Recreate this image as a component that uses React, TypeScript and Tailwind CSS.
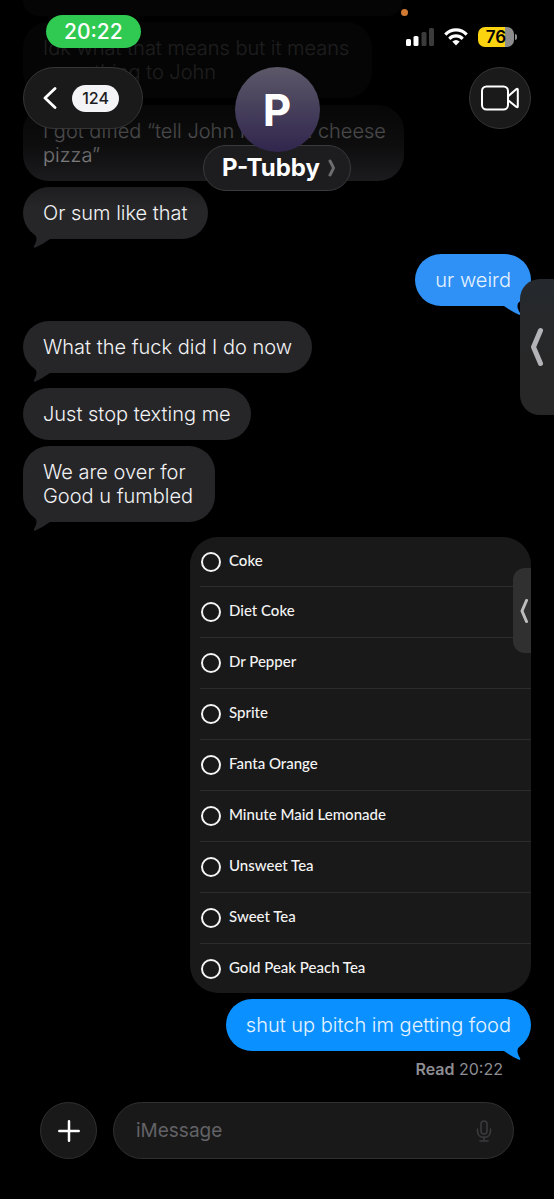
import React from 'react'

interface Message {
  text: string
  mine?: boolean
  tail?: string
  spacing: string
  width?: string
  color: string
}

const history: Message[] = [
  { text: "Idk what that means but it means something to John", spacing: "mt-1.5", width: "max-w-[349px] pr-4", color: "bg-[#262629] text-[#f2f2f4]" },
  { text: "I got dified “tell John I want a cheese pizza”", spacing: "mt-[7px]", width: "max-w-[381px] pr-3", color: "bg-[#262629] text-[#f2f2f4]" },
  { text: "Or sum like that", tail: "text-[#262629]", spacing: "mt-1.5", color: "bg-[#262629] text-[#f2f2f4]" },
  { text: "ur weird", mine: true, tail: "text-[#2f90f6]", spacing: "mt-[15px]", color: "bg-[#2f90f6] text-[#e6f3ff]" },
  { text: "What the fuck did I do now", tail: "text-[#262629]", spacing: "mt-[15px]", color: "bg-[#262629] text-[#f2f2f4]" },
  { text: "Just stop texting me", spacing: "mt-[15px]", color: "bg-[#262629] text-[#f2f2f4]" },
  { text: "We are over for Good u fumbled", tail: "text-[#262629]", spacing: "mt-1.5", width: "max-w-[192px] pr-4", color: "bg-[#262629] text-[#f2f2f4]" },
]

const drinks = [
  "Coke",
  "Diet Coke",
  "Dr Pepper",
  "Sprite",
  "Fanta Orange",
  "Minute Maid Lemonade",
  "Unsweet Tea",
  "Sweet Tea",
  "Gold Peak Peach Tea",
]

function Bubble({ text, mine, tail, spacing, width = "", color }: Message) {
  return (
    <div className={`relative rounded-[26px] px-5 py-3.5 text-xl leading-6 font-[350] ${mine ? "self-end" : "self-start"} ${spacing} ${width} ${color}`}>
      {tail && (
        <svg
          viewBox="0 0 20 18"
          className={`absolute -bottom-[10px] h-[18px] w-5 ${mine ? "right-2 -scale-x-100" : "left-2"} ${tail}`}
          fill="currentColor"
          aria-hidden="true"
        >
          <path d="M0 0C5 4 8 7 3 15Q2 17.500 4.500 16.500Q12 13 19 8L19 0Z" />
        </svg>
      )}
      <p className="relative">{text}</p>
    </div>
  )
}

function DrinkList() {
  return (
    <div className="relative mt-[15px] w-[341px] self-end overflow-hidden rounded-[28px] bg-[#191919] pl-2.5">
      <fieldset>
        {drinks.map((drink) => (
          <label
            key={drink}
            className="flex h-[51px] items-center gap-2 border-b border-[#2c2c2c] pl-px font-['Lato','Open_Sans',sans-serif] text-[15px] leading-5 font-medium text-[#f4f4f4] first:h-[50px] last:h-[49px] last:border-b-0"
          >
            <input type="radio" name="drink" className="size-5 appearance-none rounded-full border-2 border-[#f4f4f4]" />
            <span className="pb-1">{drink}</span>
          </label>
        ))}
      </fieldset>
      <div className="absolute top-[31px] right-0 flex h-[85px] w-[18px] items-center justify-end rounded-l-xl bg-[#303030] pr-[3px]">
        <svg viewBox="0 0 8 26" className="h-[26px] w-2" fill="none" stroke="#bdbdbd" strokeWidth="3" strokeLinecap="round" strokeLinejoin="round" aria-hidden="true">
          <path d="M6.500 2.500L2 13L6.500 23.500" />
        </svg>
      </div>
    </div>
  )
}

function StatusBar() {
  return (
    <div className="flex items-start justify-between pr-[37px] pl-[46px]">
      <div className="rounded-full bg-[#30c952] px-[18px] py-1 text-[21px] leading-[25px] font-medium text-white">20:22</div>
      <div className="mt-3 flex items-center gap-2.5">
        <svg viewBox="0 0 28 18" className="h-[18px] w-7" aria-hidden="true">
          <rect x="0" y="11" width="5" height="7" rx="1.500" fill="#fff" />
          <rect x="7.500" y="8" width="5" height="10" rx="1.500" fill="#fff" />
          <rect x="15.500" y="4" width="5" height="14" rx="1.500" fill="#3b3b3b" />
          <rect x="23" y="0" width="5" height="18" rx="1.500" fill="#3b3b3b" />
        </svg>
        <svg viewBox="0 0 24 18" className="h-[18px] w-6" fill="none" stroke="#fff" strokeWidth="3.200" aria-hidden="true">
          <path d="M1.300 6.600C7.300 0.400 16.700 0.400 22.700 6.600" />
          <path d="M5.300 10.800C9.200 7 14.800 7 18.700 10.800" />
          <path d="M8.300 13.600Q12 10.600 15.700 13.600L12 17.600Z" fill="#fff" stroke="none" />
        </svg>
        <div className="flex items-center gap-px">
          <div className="flex h-5 w-9 items-center justify-center rounded-[7px] bg-linear-to-r from-[#fbd40f] from-75% to-[#8c8c8c] to-75% text-[17px] leading-5 font-semibold text-black">
            76
          </div>
          <div className="h-1.5 w-0.5 rounded-r-full bg-[#8c8c8c]" />
        </div>
      </div>
    </div>
  )
}

function ChatHeader() {
  return (
    <header className="absolute inset-x-0 top-0 pt-[15px]">
      <div className="absolute top-[9px] left-[401px] size-[7px] rounded-full bg-[#d17a32]" />
      <StatusBar />
      <div className="mt-[19px] grid grid-cols-[1fr_auto_1fr] items-start px-[23px]">
        <button type="button" aria-label="Back, 124 unread" className="flex h-[62px] w-[120px] items-center gap-[15px] rounded-full border border-[#353536] bg-[#1a1a1b] pl-[19px]">
          <svg viewBox="0 0 14 22" className="h-[22px] w-3.5" fill="none" stroke="#fff" strokeWidth="2.800" strokeLinecap="round" strokeLinejoin="round" aria-hidden="true">
            <path d="M12 1.500L2 11L12 20.500" />
          </svg>
          <span className="flex h-[27px] w-[47px] items-center justify-center rounded-full bg-[#f4f4f6] text-base font-medium text-[#1c1c1e]">124</span>
        </button>
        <div className="flex flex-col items-center">
          <div className="relative z-10 flex size-[85px] items-center justify-center rounded-full bg-linear-to-b from-[#5c5868] to-[#31264d] text-[44px] font-bold text-white">
            P
          </div>
          <button type="button" className="-mt-[7px] flex h-[46px] items-center gap-2 rounded-full border border-[#3a3a3c] bg-[#1d1d1f] pr-3.5 pl-[18px] text-2xl leading-6 font-bold text-white">
            P-Tubby
            <svg viewBox="0 0 8 18" className="h-[18px] w-2" fill="none" stroke="#6d6d70" strokeWidth="3" strokeLinecap="round" strokeLinejoin="round" aria-hidden="true">
              <path d="M2 2Q4 5.500 5.500 9Q4 12.500 2 16" />
            </svg>
          </button>
        </div>
        <button type="button" aria-label="Video call" className="flex size-[62px] items-center justify-center justify-self-end rounded-full border border-[#353536] bg-[#1a1a1b]">
          <svg viewBox="0 0 38 26" className="h-[26px] w-[38px]" fill="none" stroke="#fff" strokeWidth="2" strokeLinejoin="round" aria-hidden="true">
            <rect x="1" y="1.500" width="26" height="23" rx="4.500" />
            <path d="M27.500 11L35.500 4Q36.800 3.200 36.800 4.800V21.200Q36.800 22.800 35.500 22L27.500 15.500" />
          </svg>
        </button>
      </div>
    </header>
  )
}

export default function App() {
  return (
    <div className="relative flex min-h-screen flex-col overflow-hidden bg-black font-['Inter','Liberation_Sans',sans-serif]">
      <main className="flex flex-col px-[23px]">
        {/* bottom edge of the message scrolled out of view */}
        <div className="h-4 w-full max-w-[380px] rounded-b-[26px] bg-[#262629]" />
        {history.map((message) => (
          <Bubble key={message.text} {...message} />
        ))}
        <DrinkList />
        <Bubble text="shut up bitch im getting food" mine tail="text-[#0a91ff]" spacing="mt-1.5" color="bg-[#0a91ff] text-[#e6f3ff]" />
        <p className="mt-2 mr-7 self-end text-base leading-5 text-[#8d8d93]">
          <span className="font-semibold">Read</span> 20:22
        </p>
      </main>

      {/* messages fade out under the header */}
      <div className="pointer-events-none absolute inset-x-0 top-0 h-52 bg-linear-to-b from-black/88 from-45% via-black/65 via-70% to-transparent" />
      <ChatHeader />

      <button type="button" aria-label="Show picture in picture" className="absolute top-[279px] right-0 flex h-[136px] w-[34px] items-center rounded-l-[20px] bg-linear-to-b from-[#25292d] to-[#272727] to-60% pl-2.5">
        <svg viewBox="0 0 14 40" className="h-10 w-3.5" fill="none" stroke="#b4b4b8" strokeWidth="5" strokeLinecap="round" strokeLinejoin="round" aria-hidden="true">
          <path d="M10.500 3.500L3.500 20L10.500 36.500" />
        </svg>
      </button>

      <form className="mt-[23px] flex items-center gap-4 px-10 pb-10" onSubmit={(e) => e.preventDefault()}>
        <button type="button" aria-label="Add attachment" className="flex size-[57px] shrink-0 items-center justify-center rounded-full border border-[#303031] bg-[#191919]">
          <svg viewBox="0 0 22 22" className="size-[22px]" stroke="#fff" strokeWidth="2.500" strokeLinecap="round" aria-hidden="true">
            <path d="M11 1.300V20.700M1.300 11H20.700" />
          </svg>
        </button>
        <div className="flex h-[57px] flex-1 items-center rounded-full border border-[#303031] bg-[#191919] pr-[21px] pl-[22px]">
          <input type="text" aria-label="Message" placeholder="iMessage" className="min-w-0 flex-1 bg-transparent text-[19px] leading-6 text-white outline-none placeholder:text-[#626266]" />
          <svg viewBox="0 0 16 22" className="h-[22px] w-4" fill="none" stroke="#3a3a3d" strokeWidth="1.600" strokeLinecap="round" aria-hidden="true">
            <rect x="5" y="1" width="6" height="13" rx="3" />
            <path d="M1.500 9V11C1.500 19.500 14.500 19.500 14.500 11V9M8 17.500V21M4 21H12" />
          </svg>
        </div>
      </form>
    </div>
  )
}
